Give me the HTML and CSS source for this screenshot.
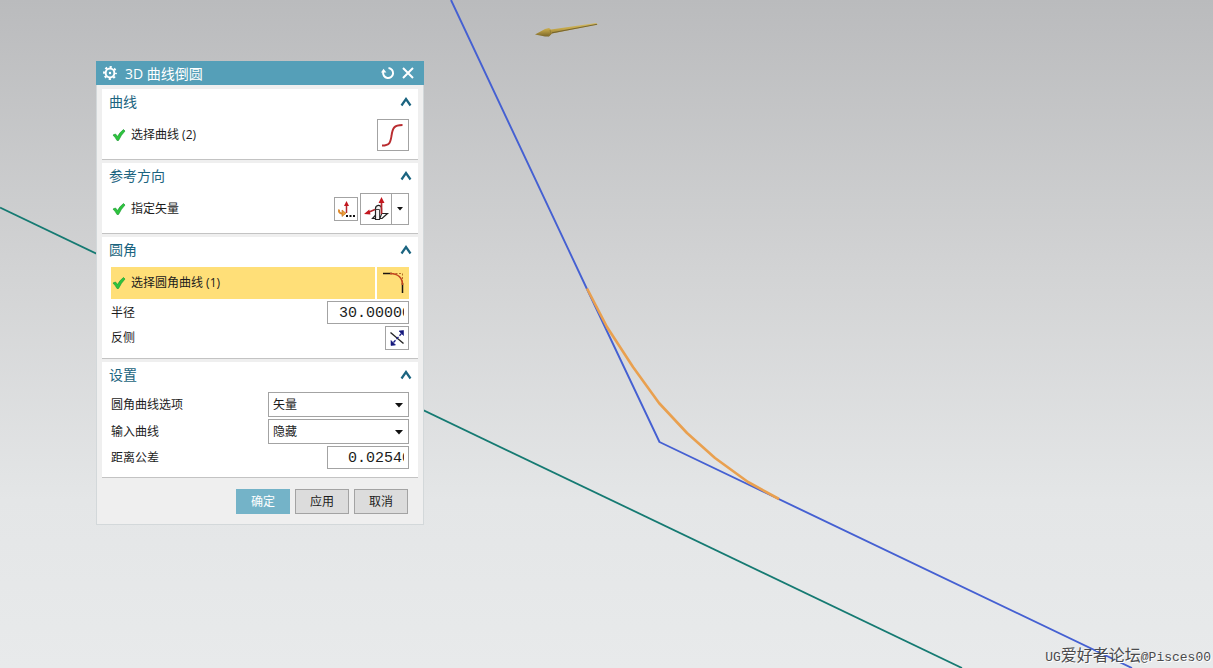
FILE: index.html
```html
<!DOCTYPE html>
<html lang="zh-CN">
<head>
<meta charset="utf-8">
<meta name="viewport" content="width=device-width, initial-scale=1">
<title>3D 曲线倒圆</title>
<link rel="stylesheet" href="styles.css">
</head>
<body>
<main class="viewport">
  <svg class="scene" viewBox="0 0 1213 668" preserveAspectRatio="xMinYMin slice" aria-hidden="true">
    <defs>
      <linearGradient id="gold" x1="0" y1="0" x2="0.15" y2="1">
        <stop offset="0" stop-color="#d8c271"/>
        <stop offset="0.5" stop-color="#c2a548"/>
        <stop offset="1" stop-color="#7b672a"/>
      </linearGradient>
    </defs>
    <g fill="none" stroke-linejoin="round">
      <path d="M0 207.500L962 668" stroke="#157a72" stroke-width="1.800"/>
      <path d="M451 0L586.500 288L659.500 442L1132 668" stroke="#4560d2" stroke-width="1.900"/>
      <path d="M587 288.500L607 327L633 367L659 403L687 433L715 458L748 482L779 499" stroke="#e9a04f" stroke-width="2.600"/>
    </g>
    <path d="M535 34.500L545 29L549 28L551 29.500L596 23L598 24.500L552 33.500L549 36.500L545 36.500Z" fill="url(#gold)"/>
    <path d="M552 32.800L597 24.300" fill="none" stroke="#6f5f2c" stroke-width="0.900"/>
    <path d="M550 30L551 34L548 36" fill="none" stroke="#8f7932" stroke-width="0.800"/>
  </svg>

  <form class="dialog" aria-labelledby="dialog-title">
    <header class="titlebar">
      <button type="button" class="title-button" aria-label="选项">
        <svg width="14" height="14" viewBox="0 0 14 14">
          <circle cx="7" cy="7" r="4.400" fill="none" stroke="#fff" stroke-width="2"/>
          <circle cx="7" cy="7" r="6" fill="none" stroke="#fff" stroke-width="1.900" stroke-dasharray="2.200 2.512" stroke-dashoffset="1.100"/>
          <circle cx="7" cy="7" r="1.200" fill="#fff"/>
        </svg>
      </button>
      <h1 class="title" id="dialog-title">3D 曲线倒圆</h1>
      <button type="button" class="title-button" aria-label="重置">
        <svg width="14" height="14" viewBox="0 0 14 14">
          <path d="M7.500 2A5 5 0 1 1 2.200 6" fill="none" stroke="#fff" stroke-width="2"/>
          <path d="M0 6.500L2.500 2.800L5.400 6.500Z" fill="#fff"/>
        </svg>
      </button>
      <button type="button" class="title-button" aria-label="关闭">
        <svg width="14" height="14" viewBox="0 0 14 14"><path d="M2 2L12 12M12 2L2 12" fill="none" stroke="#fff" stroke-width="2"/></svg>
      </button>
    </header>

    <div class="sections">
      <section class="section">
        <div class="section-head">
          <h2 class="section-title">曲线</h2>
          <button type="button" class="collapse" aria-label="折叠曲线"><svg width="12" height="10" viewBox="0 0 12 10"><path d="M1.500 8.500L6 2L10.500 8.500" fill="none" stroke="#1b6480" stroke-width="2.200"/></svg></button>
        </div>
        <div class="row row-pick">
          <svg class="tick" width="14" height="14" viewBox="0 0 14 14"><path d="M1 7L3.500 6L5.500 8.500Q8 4 11.500 1.500L13 3Q9 7 6.500 12.500L5 12.500Q3.500 9.500 1 7Z" fill="#2dc43d" stroke="#1f9e36" stroke-width="0.700"/></svg>
          <span class="label">选择曲线 (2)</span>
          <button type="button" class="tool tool-large" aria-label="曲线">
            <svg width="30" height="30" viewBox="0 0 30 30"><path d="M4 25.500C12 25.500 12.500 22 13.500 16C14.500 8 16 5 24.500 5" fill="none" stroke="#b92c30" stroke-width="1.900"/></svg>
          </button>
        </div>
      </section>

      <section class="section">
        <div class="section-head">
          <h2 class="section-title">参考方向</h2>
          <button type="button" class="collapse" aria-label="折叠参考方向"><svg width="12" height="10" viewBox="0 0 12 10"><path d="M1.500 8.500L6 2L10.500 8.500" fill="none" stroke="#1b6480" stroke-width="2.200"/></svg></button>
        </div>
        <div class="row row-pick">
          <svg class="tick" width="14" height="14" viewBox="0 0 14 14"><path d="M1 7L3.500 6L5.500 8.500Q8 4 11.500 1.500L13 3Q9 7 6.500 12.500L5 12.500Q3.500 9.500 1 7Z" fill="#2dc43d" stroke="#1f9e36" stroke-width="0.700"/></svg>
          <span class="label">指定矢量</span>
          <button type="button" class="tool tool-small" aria-label="矢量对话框">
            <svg width="22" height="22" viewBox="0 0 22 22">
              <path d="M11.500 15V6" stroke="#b3262c" stroke-width="1.500"/>
              <path d="M11.500 3L14 8H9Z" fill="#c3171f"/>
              <path d="M4 11.500C3.500 14.500 5.500 15.800 8 15.500" fill="none" stroke="#df8a2c" stroke-width="2"/>
              <path d="M7 12L11 15.300L7 18.500Z" fill="#f0a238" stroke="#b9661b" stroke-width="0.600"/>
              <path d="M11 17h2v2h-2zM14.500 17h2v2h-2zM18 17h2v2h-2z" fill="#111"/>
            </svg>
          </button>
          <div class="split">
            <button type="button" class="split-main" aria-label="矢量">
              <svg width="30" height="30" viewBox="0 0 30 30">
                <path d="M11.500 24.500L16 19.500H26.500L21 24.500Z" fill="#fff" stroke="#222" stroke-width="1.200"/>
                <path d="M14.500 14.500C14.500 11 20 10 20.500 14V20L18.500 25.500H14.500Z" fill="#f4f4f4" stroke="#222" stroke-width="1.200"/>
                <path d="M14.500 15.500H18.500V25" fill="none" stroke="#444" stroke-width="1"/>
                <path d="M20.500 20V7M14 15.500L7 18.500" fill="none" stroke="#b3262c" stroke-width="1.700"/>
                <path d="M20.500 3L23.500 9H17.500ZM3 20L8.300 15.500L9.500 20.500Z" fill="#c3171f"/>
              </svg>
            </button>
            <button type="button" class="split-arrow" aria-label="更多矢量类型"><svg width="6" height="4" viewBox="0 0 6 4"><path d="M0 0H6L3 3.500Z" fill="#111"/></svg></button>
          </div>
        </div>
      </section>

      <section class="section">
        <div class="section-head">
          <h2 class="section-title">圆角</h2>
          <button type="button" class="collapse" aria-label="折叠圆角"><svg width="12" height="10" viewBox="0 0 12 10"><path d="M1.500 8.500L6 2L10.500 8.500" fill="none" stroke="#1b6480" stroke-width="2.200"/></svg></button>
        </div>
        <div class="row row-pick row-active">
          <div class="active-label">
            <svg class="tick" width="14" height="14" viewBox="0 0 14 14"><path d="M1 7L3.500 6L5.500 8.500Q8 4 11.500 1.500L13 3Q9 7 6.500 12.500L5 12.500Q3.500 9.500 1 7Z" fill="#2dc43d" stroke="#1f9e36" stroke-width="0.700"/></svg>
            <span class="label">选择圆角曲线 (1)</span>
          </div>
          <button type="button" class="tool tool-active" aria-label="圆角曲线">
            <svg width="32" height="32" viewBox="0 0 32 32">
              <path d="M6 6.500H15M25.500 16V26" fill="none" stroke="#1b1512" stroke-width="1.500"/>
              <path d="M15 6.500H25.500V16" fill="none" stroke="#b5702b" stroke-dasharray="2 1.500"/>
              <path d="M13 6.500C21 6.500 25.500 11 25.500 18" fill="none" stroke="#c2451f" stroke-width="1.700"/>
            </svg>
          </button>
        </div>
        <div class="row">
          <label class="label" for="radius">半径</label>
          <input class="number number-radius" id="radius" type="text" value="30.00000">
        </div>
        <div class="row">
          <span class="label" id="flip-label">反侧</span>
          <button type="button" class="tool tool-small" aria-labelledby="flip-label">
            <svg width="22" height="22" viewBox="0 0 22 22">
              <path d="M4.500 5.500L17.500 16.500" stroke="#222" stroke-width="1.300"/>
              <path d="M7.500 15.500L15.500 6.500" stroke="#1a1d86" stroke-width="1.300" stroke-dasharray="3 1.500"/>
              <path d="M17.500 3.500V8.500L13 4ZM5 18.500V13.500L9.500 18Z" fill="#14177c" stroke="#14177c" stroke-width="0.600"/>
            </svg>
          </button>
        </div>
      </section>

      <section class="section section-settings">
        <div class="section-head">
          <h2 class="section-title">设置</h2>
          <button type="button" class="collapse" aria-label="折叠设置"><svg width="12" height="10" viewBox="0 0 12 10"><path d="M1.500 8.500L6 2L10.500 8.500" fill="none" stroke="#1b6480" stroke-width="2.200"/></svg></button>
        </div>
        <div class="row">
          <label class="label" for="blend-option">圆角曲线选项</label>
          <div class="select">
            <select id="blend-option"><option>矢量</option></select>
            <svg class="select-arrow" width="8" height="5" viewBox="0 0 8 5"><path d="M0 0H8L4 4.500Z" fill="#111"/></svg>
          </div>
        </div>
        <div class="row">
          <label class="label" for="input-curve">输入曲线</label>
          <div class="select">
            <select id="input-curve"><option>隐藏</option></select>
            <svg class="select-arrow" width="8" height="5" viewBox="0 0 8 5"><path d="M0 0H8L4 4.500Z" fill="#111"/></svg>
          </div>
        </div>
        <div class="row">
          <label class="label" for="tolerance">距离公差</label>
          <input class="number number-tolerance" id="tolerance" type="text" value="0.02540">
        </div>
      </section>
    </div>

    <footer class="actions">
      <button type="submit" class="action action-primary">确定</button>
      <button type="button" class="action">应用</button>
      <button type="button" class="action">取消</button>
    </footer>
  </form>

  <p class="credit"><span class="credit-latin">UG</span>爱好者论坛<span class="credit-latin">@Pisces00</span></p>
</main>
</body>
</html>
```

FILE: styles.css
```css
* {
  box-sizing: border-box;
}

body {
  margin: 0;
  font: 12px/16px "Open Sans", "Noto Sans CJK SC", sans-serif;
  color: #1c1c1c;
}

h1,
h2,
p {
  margin: 0;
  font-weight: 400;
}

button,
input,
select {
  margin: 0;
  padding: 0;
  font: inherit;
  color: inherit;
}

svg {
  display: block;
  flex: none;
}

.viewport {
  position: relative;
  min-height: 100vh;
  overflow: hidden;
  background: linear-gradient(#babbbd, #d2d3d4 40%, #e4e6e7 75%, #e8eaeb);
}

.scene {
  position: absolute;
  inset: 0;
  width: 100%;
  height: 100%;
}

/* Floating dialog */
.dialog {
  position: absolute;
  top: 61px;
  left: 96px;
  width: 328px;
  background: #efefef;
  border: 1px solid #d3d8da;
  border-top: 0;
}

.titlebar {
  display: flex;
  align-items: center;
  gap: 6px;
  height: 24px;
  margin: 0 -1px;
  padding: 0 9px 0 7px;
  background: #559fb8;
  color: #fff;
}

.title {
  flex: 1;
  padding: 2px 0 0 2px;
  font-size: 14px;
  line-height: 24px;
}

.title-button,
.collapse {
  display: flex;
  border: 0;
  background: none;
}

.sections {
  display: flex;
  flex-direction: column;
  gap: 3px;
  padding: 4px 5px 0;
}

.section {
  display: flex;
  flex-direction: column;
  gap: 2px;
  padding: 0 9px 8px;
  background: #fff;
  border-bottom: 1px solid #c3c3c3;
}

.section-head {
  display: flex;
  align-items: center;
  justify-content: space-between;
  height: 28px;
  padding: 0 0 2px;
  margin-right: -3px;
}

.section-title {
  margin-left: -2px;
  font-size: 14px;
  line-height: 24px;
  color: #1b6480;
}

.row {
  display: flex;
  align-items: center;
  gap: 2px;
}

.label {
  flex: 1;
}

.tick {
  margin: 0 3px 0 1px;
}

.row-active .active-label {
  display: flex;
  flex: 1;
  align-items: center;
  gap: 2px;
  height: 32px;
  background: #ffdf78;
}

.tool,
.split {
  display: flex;
  align-items: center;
  justify-content: center;
  background: #fff;
  border: 1px solid #a3a3a3;
}

.tool-large {
  width: 32px;
  height: 32px;
}

.tool-small {
  width: 24px;
  height: 24px;
}

.tool-active {
  width: 32px;
  height: 32px;
  border: 0;
  background: #ffdf78;
}

.split {
  height: 32px;
}

.split button {
  display: flex;
  align-items: center;
  justify-content: center;
  height: 30px;
  border: 0;
  background: none;
}

.split .split-arrow {
  width: 17px;
  border-left: 1px solid #a3a3a3;
}

.number {
  width: 82px;
  height: 23px;
  padding-top: 2px;
  padding-right: 4px;
  border: 1px solid #a3a3a3;
  background: #fff;
  font: 15px/19px "Liberation Mono", monospace;
}

.number-radius {
  padding-left: 11px;
}

.number-tolerance {
  padding-left: 20px;
}

.select {
  position: relative;
  width: 141px;
}

.select select {
  display: block;
  width: 100%;
  height: 25px;
  padding: 0 20px 0 4px;
  border: 1px solid #a3a3a3;
  border-radius: 0;
  background: #fff;
  appearance: none;
}

.select-arrow {
  position: absolute;
  top: 11px;
  right: 6px;
  pointer-events: none;
}

.actions {
  display: flex;
  justify-content: flex-end;
  gap: 5px;
  padding: 11px 15px 10px;
}

.action {
  width: 54px;
  height: 25px;
  border: 1px solid #a3a3a3;
  background: #dcdcdc;
}

.action-primary {
  border-color: #74b3c8;
  background: #74b3c8;
  color: #fff;
}

.credit {
  position: absolute;
  right: 2px;
  bottom: 0;
  font: 16px/20px "Noto Sans CJK SC", sans-serif;
  color: #4a4a4c;
  text-shadow: 1px 1px 0 #fff;
}

.credit-latin {
  font-family: "Liberation Mono", monospace;
  font-size: 13px;
}
```
